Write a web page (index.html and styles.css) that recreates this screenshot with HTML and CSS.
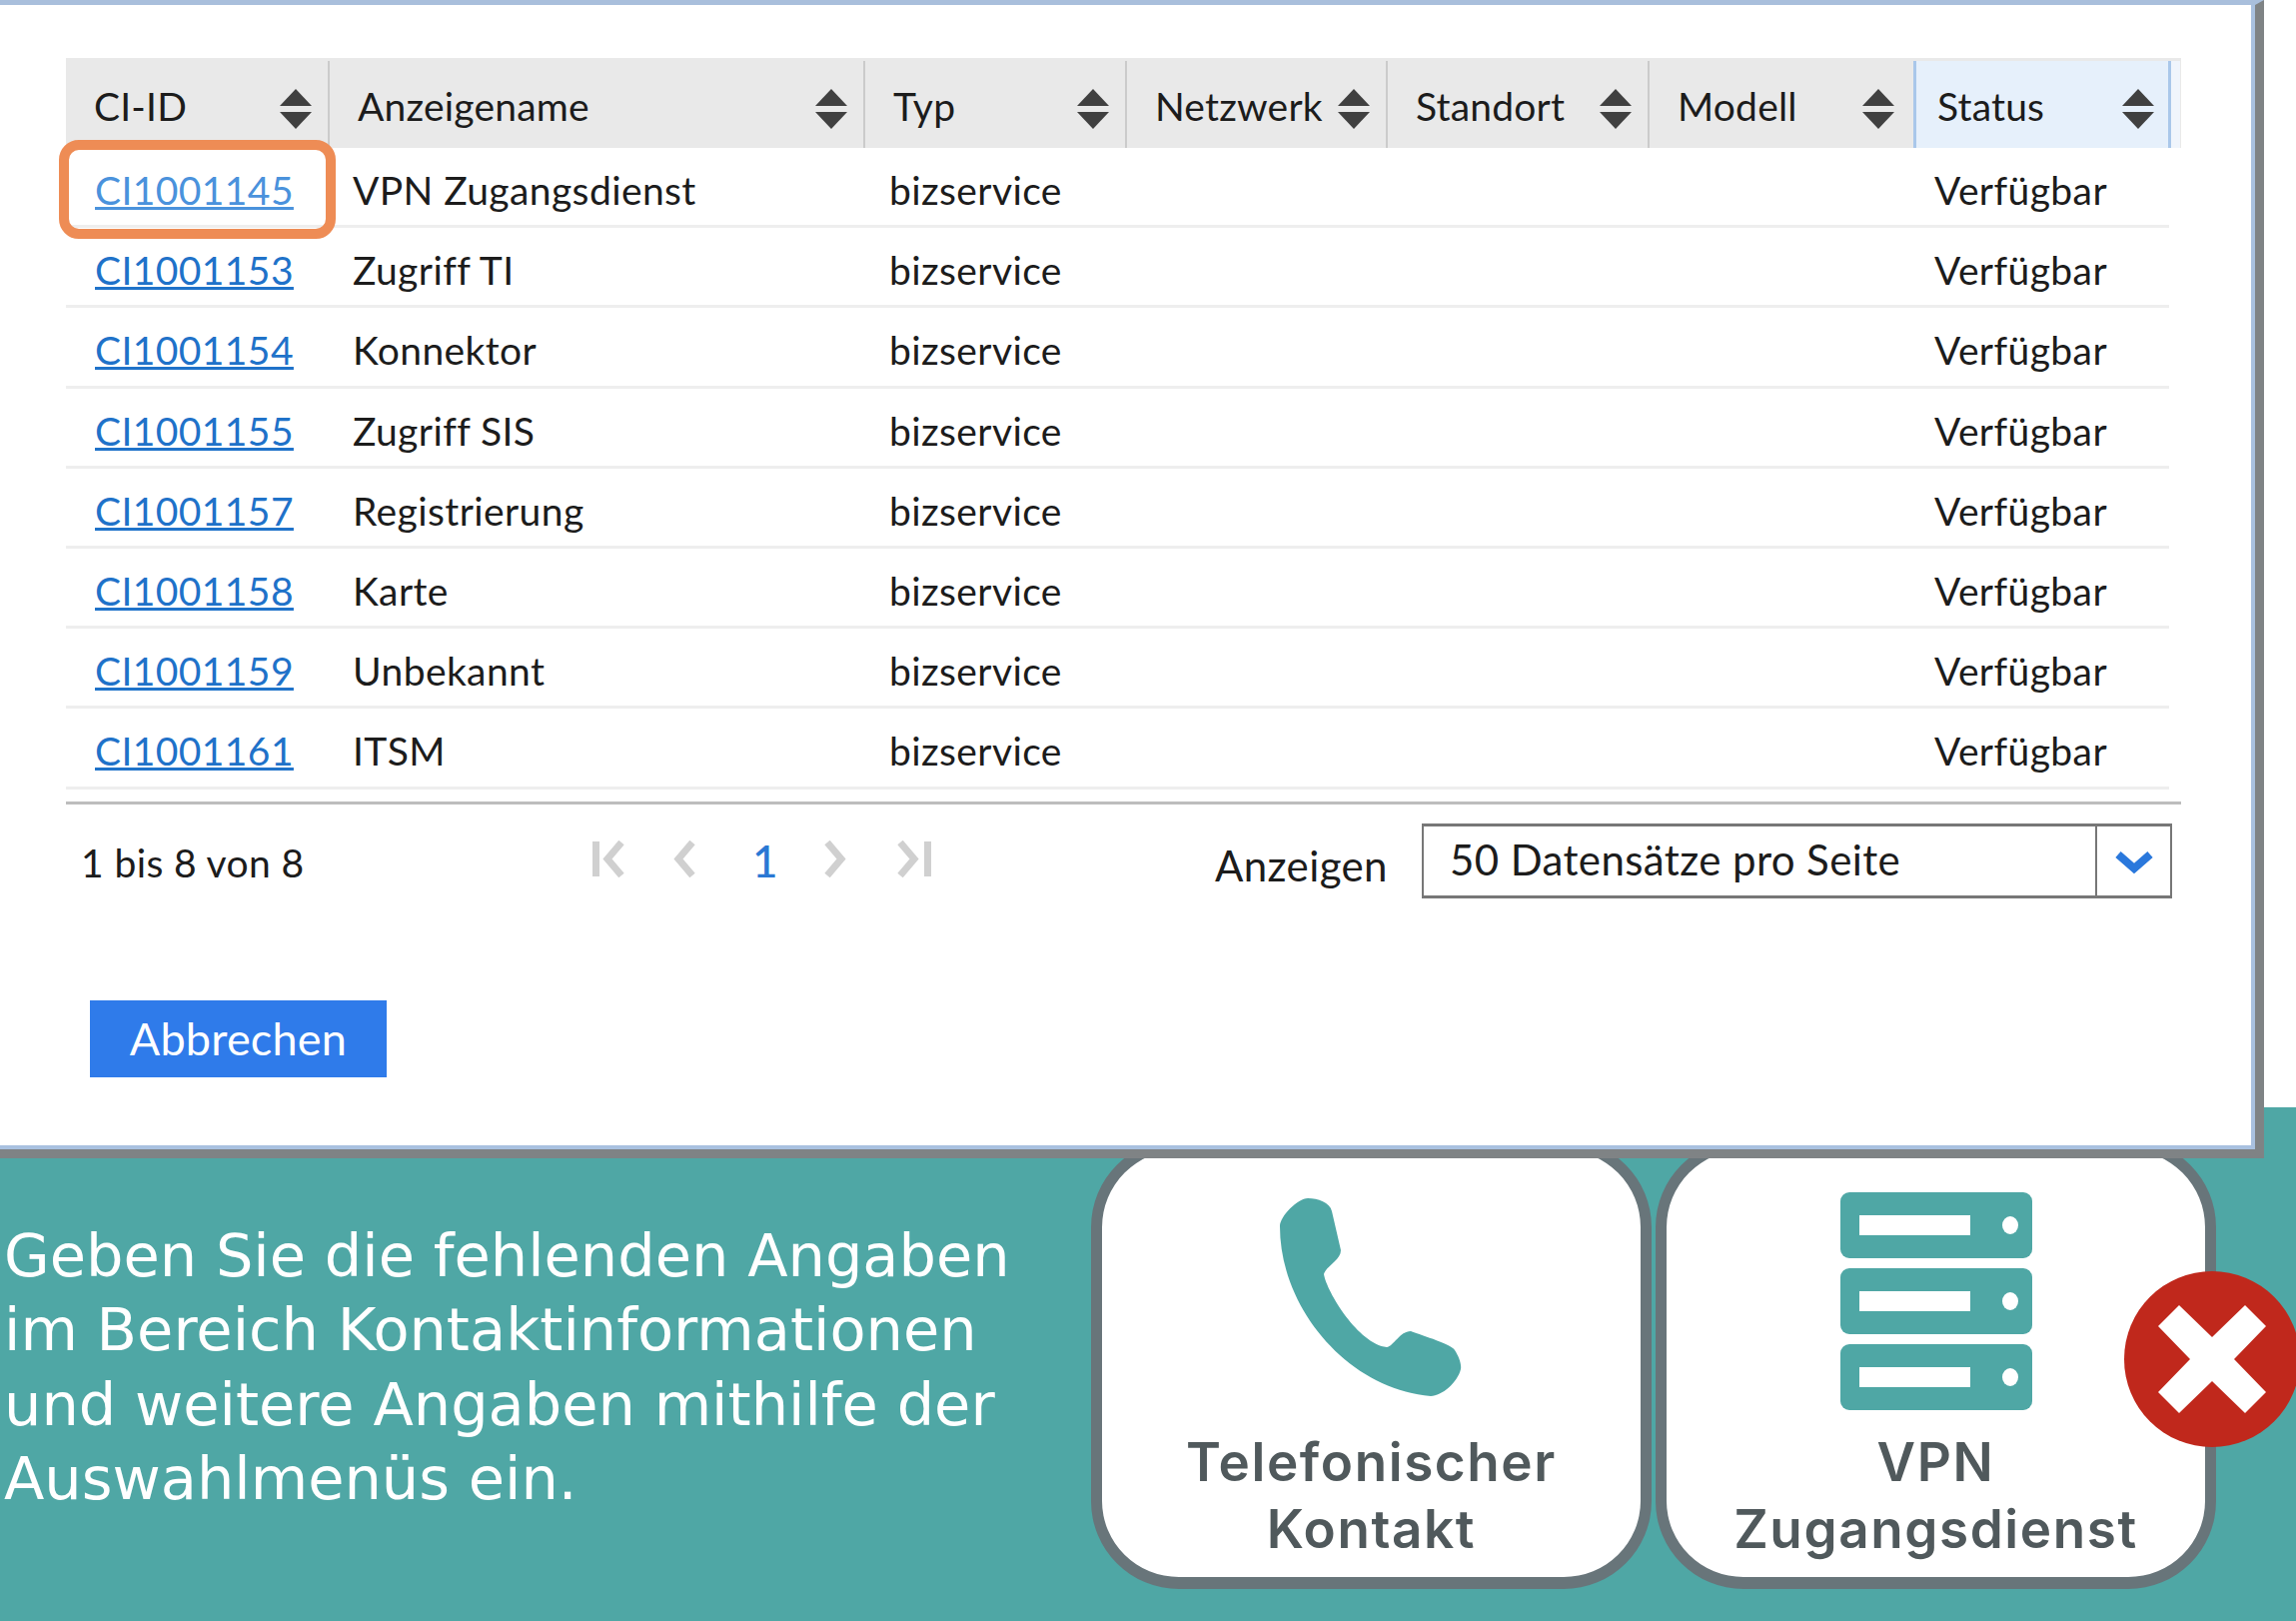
FILE: index.html
```html
<!DOCTYPE html>
<html lang="de">
<head>
  <meta charset="UTF-8">
  <title>CI-Auswahl</title>
  <link rel="stylesheet" href="styles.css">
</head>
<body>
  <svg class="defs" width="0" height="0">
    <symbol id="sort" viewBox="0 0 32 40">
      <path d="M16 0 L32 17 L0 17 Z" fill="#404040"/>
      <path d="M0 23 L32 23 L16 40 Z" fill="#404040"/>
    </symbol>
    <symbol id="rack" viewBox="0 0 192 66">
      <rect width="192" height="66" rx="9" fill="#4fa7a5"/>
      <rect x="19" y="23" width="111" height="20" fill="#fff"/>
      <ellipse cx="170" cy="33" rx="8" ry="9" fill="#fff"/>
    </symbol>
  </svg>

  <div class="dialog">
    <div class="head">
      <div class="th"><span>CI-ID</span><svg class="sort"><use href="#sort"/></svg></div>
      <div class="th"><span>Anzeigename</span><svg class="sort"><use href="#sort"/></svg></div>
      <div class="th"><span>Typ</span><svg class="sort"><use href="#sort"/></svg></div>
      <div class="th"><span>Netzwerk</span><svg class="sort"><use href="#sort"/></svg></div>
      <div class="th"><span>Standort</span><svg class="sort"><use href="#sort"/></svg></div>
      <div class="th"><span>Modell</span><svg class="sort"><use href="#sort"/></svg></div>
      <div class="th active"><span>Status</span><svg class="sort"><use href="#sort"/></svg></div>
    </div>

    <div class="row">
      <div class="cell id"><a href="#" class="first">CI1001145</a><div class="marker"></div></div>
      <div class="cell name">VPN Zugangsdienst</div>
      <div class="cell type">bizservice</div>
      <div class="cell status">Verfügbar</div>
    </div>
    <div class="row">
      <div class="cell id"><a href="#">CI1001153</a></div>
      <div class="cell name">Zugriff TI</div>
      <div class="cell type">bizservice</div>
      <div class="cell status">Verfügbar</div>
    </div>
    <div class="row">
      <div class="cell id"><a href="#">CI1001154</a></div>
      <div class="cell name">Konnektor</div>
      <div class="cell type">bizservice</div>
      <div class="cell status">Verfügbar</div>
    </div>
    <div class="row">
      <div class="cell id"><a href="#">CI1001155</a></div>
      <div class="cell name">Zugriff SIS</div>
      <div class="cell type">bizservice</div>
      <div class="cell status">Verfügbar</div>
    </div>
    <div class="row">
      <div class="cell id"><a href="#">CI1001157</a></div>
      <div class="cell name">Registrierung</div>
      <div class="cell type">bizservice</div>
      <div class="cell status">Verfügbar</div>
    </div>
    <div class="row">
      <div class="cell id"><a href="#">CI1001158</a></div>
      <div class="cell name">Karte</div>
      <div class="cell type">bizservice</div>
      <div class="cell status">Verfügbar</div>
    </div>
    <div class="row">
      <div class="cell id"><a href="#">CI1001159</a></div>
      <div class="cell name">Unbekannt</div>
      <div class="cell type">bizservice</div>
      <div class="cell status">Verfügbar</div>
    </div>
    <div class="row">
      <div class="cell id"><a href="#">CI1001161</a></div>
      <div class="cell name">ITSM</div>
      <div class="cell type">bizservice</div>
      <div class="cell status">Verfügbar</div>
    </div>

    <div class="footer">
      <div class="summary">1 bis 8 von 8</div>
      <div class="pager">
        <svg class="page-icon" width="32" height="37" viewBox="0 0 32 37"><path d="M3.5 1 V36 M29 2 L15 18.5 L29 35" fill="none" stroke="#d0d0d0" stroke-width="7"/></svg>
        <svg class="page-icon prev" width="24" height="37" viewBox="0 0 24 37"><path d="M20 2 L6 18.5 L20 35" fill="none" stroke="#d0d0d0" stroke-width="7"/></svg>
        <a href="#" class="page-num">1</a>
        <svg class="page-icon next" width="22" height="37" viewBox="0 0 22 37"><path d="M3 2 L17 18.5 L3 35" fill="none" stroke="#d0d0d0" stroke-width="7"/></svg>
        <svg class="page-icon last" width="34" height="37" viewBox="0 0 34 37"><path d="M3 2 L17 18.5 L3 35 M30.5 1 V36" fill="none" stroke="#d0d0d0" stroke-width="7"/></svg>
      </div>
      <div class="show-label">Anzeigen</div>
      <div class="select">
        <div class="select-value">50 Datensätze pro Seite</div>
        <div class="select-arrow">
          <svg width="40" height="24" viewBox="0 0 40 24"><path d="M4 4 L20 18 L36 4" fill="none" stroke="#2a78dc" stroke-width="8"/></svg>
        </div>
      </div>
    </div>

    <button class="cancel">Abbrechen</button>
  </div>

  <div class="band">
    <p class="hint">Geben Sie die fehlenden Angaben im Bereich Kontaktinformationen und weitere Angaben mithilfe der Auswahlmenüs ein.</p>
    <div class="cards">
      <div class="card">
        <svg class="phone" width="195" height="206" viewBox="0 0 195 206">
          <path d="M34 4 C44 4 56 8 58 17 L67 56 C67 66 52 72 50 80 C53 98 85 150 113 153 C120 152 126 137 137 137 C150 142 178 150 181 156 C185 162 188 170 187 175 C184 188 168 202 157 202 C75 195 6 115 6 32 C6 22 24 4 34 4 Z" fill="#4fa7a5"/>
        </svg>
        <div class="card-label">Telefonischer Kontakt</div>
      </div>
      <div class="card">
        <div class="server">
          <svg class="rack"><use href="#rack"/></svg>
          <svg class="rack"><use href="#rack"/></svg>
          <svg class="rack"><use href="#rack"/></svg>
        </div>
        <div class="card-label">VPN Zugangsdienst</div>
        <svg class="wrong" width="176" height="176" viewBox="-88 -88 176 176">
          <circle r="88" fill="#c0281c"/>
          <path d="M-33 -54 L0 -22 L33 -54 L54 -33 L22 0 L54 33 L33 54 L0 22 L-33 54 L-54 33 L-22 0 L-54 -33 Z" fill="#fff"/>
        </svg>
      </div>
    </div>
  </div>
</body>
</html>
```

FILE: styles.css
```css
html, body {
  margin: 0;
  height: 1622px;
  overflow: hidden;
  background-color: #fff;
}

body {
  width: 2298px;
  font-family: "Lato", "Liberation Sans", sans-serif;
  color: #1c1c1c;
}

.defs {
  display: block;
}

.dialog {
  position: relative;
  z-index: 2;
  box-sizing: border-box;
  width: 2266px;
  height: 1159px;
  padding: 53px 0 0 66px;
  background-color: #fff;
  border-top: 5px solid #a9bfdc;
  border-right: 9px solid #7f8385;
  border-bottom: 9px solid #7f8385;
  box-shadow: inset -4px -4px 0 #a9c1e0;
}

.head {
  display: grid;
  grid-template-columns: 264px 536px 262px 261px 262px 264px 258px;
  box-sizing: border-box;
  width: 2117px;
  height: 90px;
  padding-top: 3px;
  background-color: #e9e9e9;
}

.th {
  display: flex;
  justify-content: space-between;
  align-items: center;
  box-sizing: border-box;
  padding: 0 16px 0 28px;
  font-size: 39px;
  letter-spacing: 0.2px;
  border-right: 2px solid #cbcbcb;
}

.th span {
  margin-top: 2px;
}

.th:nth-child(6) {
  border-right: none;
  padding-right: 19px;
}

.th.active {
  background-color: #e6f0fb;
  border-left: 3px solid #a9c7ea;
  border-right: 3px solid #a9c7ea;
  box-shadow: 9px 0 0 #f0f5fc;
  padding: 0 14px 0 21px;
}

.sort {
  flex: none;
  width: 32px;
  height: 40px;
  margin-top: 9px;
}

.row {
  display: grid;
  grid-template-columns: 287px 537px 1046px 1fr;
  box-sizing: border-box;
  width: 2105px;
  height: 80.2px;
  border-bottom: 3px solid #eeeeee;
  font-size: 39px;
  letter-spacing: 0.4px;
  line-height: 77px;
}

.cell {
  padding-top: 4px;
}

.id {
  position: relative;
  padding-left: 29px;
}

.id a {
  color: #1f72c9;
}

.id a.first {
  color: #4a92dc;
}

.marker {
  position: absolute;
  left: -7px;
  top: -8px;
  box-sizing: border-box;
  width: 277px;
  height: 99px;
  border: 10px solid #ee8c55;
  border-radius: 20px;
}

.footer {
  display: flex;
  align-items: flex-start;
  width: 2117px;
  margin-top: 12px;
  padding-top: 18px;
  border-top: 3px solid #bdbdbd;
}

.summary {
  width: 512px;
  padding: 17px 0 0 15px;
  font-size: 39px;
  letter-spacing: 0.4px;
}

.pager {
  display: flex;
  align-items: flex-start;
  width: 623px;
  padding-top: 18px;
}

.page-icon {
  flex: none;
}

.prev {
  margin-left: 48px;
}

.next {
  margin-left: 50px;
}

.last {
  margin-left: 51px;
}

.page-num {
  width: 22px;
  margin: 2px 0 0 56px;
  font-size: 44px;
  font-weight: 500;
  line-height: 37px;
  text-align: center;
  color: #2a78d4;
  text-decoration: none;
}

.show-label {
  width: 207px;
  padding-top: 18px;
  font-size: 42px;
  letter-spacing: 0.4px;
}

.select {
  display: flex;
  box-sizing: border-box;
  width: 751px;
  height: 75px;
  margin-top: 1px;
  border: 2px solid #777;
  border-width: 3px 2px;
}

.select-value {
  flex: 1;
  padding-left: 26px;
  font-size: 42px;
  letter-spacing: 0.4px;
  line-height: 66px;
}

.select-arrow {
  display: flex;
  align-items: center;
  justify-content: center;
  box-sizing: border-box;
  width: 75px;
  padding-top: 3px;
  border-left: 2px solid #777;
}

.cancel {
  display: block;
  width: 297px;
  height: 77px;
  margin: 102px 0 0 24px;
  padding: 0;
  border: none;
  background-color: #2f7bea;
  color: #fff;
  font-family: inherit;
  font-size: 45px;
  letter-spacing: 0.2px;
}

.band {
  display: flex;
  box-sizing: border-box;
  height: 514px;
  margin-top: -51px;
  background-color: #4fa7a5;
  overflow: hidden;
}

.hint {
  box-sizing: border-box;
  width: 1092px;
  margin: 0;
  padding: 112px 0 0 4px;
  font-family: "DejaVu Sans", "Liberation Sans", sans-serif;
  font-size: 59px;
  line-height: 74.4px;
  color: #fff;
}

.cards {
  display: flex;
  gap: 4px;
  padding-top: 32px;
}

.card {
  position: relative;
  display: flex;
  flex-direction: column;
  align-items: center;
  box-sizing: border-box;
  width: 561px;
  height: 450px;
  background-color: #fff;
  border: 11px solid #68757a;
  border-bottom-width: 12px;
  border-radius: 88px;
}

.phone {
  flex: none;
  margin-top: 44px;
}

.server {
  display: flex;
  flex-direction: column;
  gap: 10px;
  margin-top: 42px;
}

.rack {
  display: block;
  width: 192px;
  height: 66px;
}

.card-label {
  position: absolute;
  left: 0;
  right: 0;
  top: 279px;
  padding: 0 40px;
  font-family: "Inter", "Liberation Sans", sans-serif;
  font-size: 53px;
  font-weight: 600;
  letter-spacing: 1.6px;
  line-height: 67px;
  text-align: center;
  color: #50595c;
}

.wrong {
  position: absolute;
  left: 458px;
  top: 121px;
}
```
